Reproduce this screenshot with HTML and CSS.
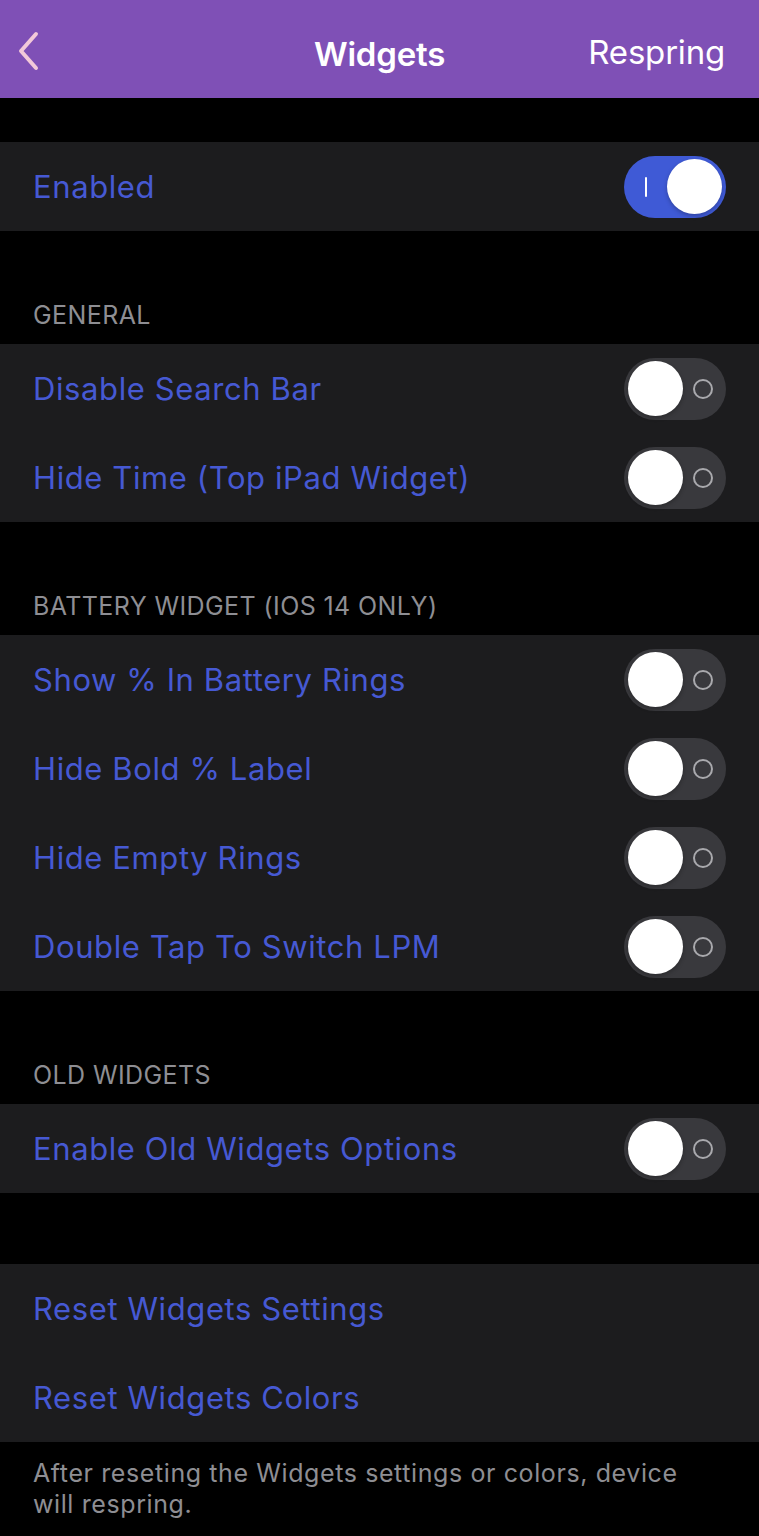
FILE: index.html
```html
<!DOCTYPE html>
<html lang="en">
<head>
  <meta charset="UTF-8" />
  <title>Widgets</title>
  <meta name="viewport" content="width=device-width, initial-scale=1.0"/>
  <link rel="stylesheet" href="styles.css">
</head>
<body>
  <header class="nav-bar">
    <button class="nav-back" aria-label="Back">
      <svg width="24" height="40" viewBox="0 0 24 40">
        <path d="M20 3 L5 20 L20 37" fill="none" stroke="#f3c9d9" stroke-width="4" stroke-linecap="round" stroke-linejoin="round"/>
      </svg>
    </button>
    <h1 class="nav-title">Widgets</h1>
    <button class="nav-action">Respring</button>
  </header>

  <main class="settings">
    <section class="section section-first">
      <div class="group">
        <div class="row">
          <span class="row-label">Enabled</span>
          <span class="switch on"><span class="switch-mark"></span><span class="switch-knob"></span></span>
        </div>
      </div>
    </section>

    <section class="section">
      <h2 class="section-title">GENERAL</h2>
      <div class="group">
        <div class="row">
          <span class="row-label">Disable Search Bar</span>
          <span class="switch"><span class="switch-knob"></span><span class="switch-mark"></span></span>
        </div>
        <div class="row">
          <span class="row-label">Hide Time (Top iPad Widget)</span>
          <span class="switch"><span class="switch-knob"></span><span class="switch-mark"></span></span>
        </div>
      </div>
    </section>

    <section class="section">
      <h2 class="section-title">BATTERY WIDGET (IOS 14 ONLY)</h2>
      <div class="group">
        <div class="row">
          <span class="row-label">Show % In Battery Rings</span>
          <span class="switch"><span class="switch-knob"></span><span class="switch-mark"></span></span>
        </div>
        <div class="row">
          <span class="row-label">Hide Bold % Label</span>
          <span class="switch"><span class="switch-knob"></span><span class="switch-mark"></span></span>
        </div>
        <div class="row">
          <span class="row-label">Hide Empty Rings</span>
          <span class="switch"><span class="switch-knob"></span><span class="switch-mark"></span></span>
        </div>
        <div class="row">
          <span class="row-label">Double Tap To Switch LPM</span>
          <span class="switch"><span class="switch-knob"></span><span class="switch-mark"></span></span>
        </div>
      </div>
    </section>

    <section class="section">
      <h2 class="section-title">OLD WIDGETS</h2>
      <div class="group">
        <div class="row">
          <span class="row-label">Enable Old Widgets Options</span>
          <span class="switch"><span class="switch-knob"></span><span class="switch-mark"></span></span>
        </div>
      </div>
    </section>

    <section class="section section-plain">
      <div class="group">
        <div class="row"><span class="row-label">Reset Widgets Settings</span></div>
        <div class="row"><span class="row-label">Reset Widgets Colors</span></div>
      </div>
      <p class="section-footer">After reseting the Widgets settings or colors, device will respring.</p>
    </section>
  </main>
</body>
</html>
```

FILE: styles.css
```css
:root {
  --nav: #7f50b6;
  --bg: #000000;
  --cell: #1c1c1e;
  --tint: #4659d3;
  --muted: #8e8e93;
  --switch-off: #39393d;
}

* {
  box-sizing: border-box;
}

body {
  margin: 0;
  background: var(--bg);
  font-family: Inter, "Noto Sans", sans-serif;
  color: #fff;
}

.nav-bar {
  height: 98px;
  background: var(--nav);
  display: flex;
  align-items: center;
  justify-content: space-between;
  padding: 6px 34px 0 16px;
  position: relative;
}

.nav-back {
  background: none;
  border: none;
  padding: 0;
  display: flex;
  margin-top: -2px;
}

.nav-title {
  position: absolute;
  left: 0;
  right: 0;
  top: 34px;
  text-align: center;
  margin: 0;
  font-size: 33px;
  line-height: 40px;
  font-weight: 600;
  letter-spacing: -0.2px;
  pointer-events: none;
}

.nav-action {
  background: none;
  border: none;
  padding: 0;
  color: #fff;
  font-family: inherit;
  font-size: 33px;
  letter-spacing: -0.2px;
}

.section {
  padding-top: 113px;
}

.section-first {
  padding-top: 44px;
}

.section-plain {
  padding-top: 71px;
}

.section-title {
  margin: -41px 0 0;
  height: 41px;
  padding: 0 33px;
  font-size: 25px;
  line-height: 25px;
  font-weight: 400;
  color: var(--muted);
  letter-spacing: 0.4px;
}

.group {
  background: var(--cell);
}

.row {
  height: 89px;
  display: flex;
  align-items: center;
  justify-content: space-between;
  padding: 0 33px;
}

.row-label {
  color: var(--tint);
  font-size: 31px;
  letter-spacing: 0.6px;
}

.switch {
  width: 102px;
  height: 62px;
  border-radius: 31px;
  background: var(--switch-off);
  display: flex;
  align-items: center;
  padding: 0 4px;
  gap: 10px;
}

.switch-knob {
  width: 55px;
  height: 55px;
  border-radius: 50%;
  background: #fff;
  box-shadow: 0 2px 4px rgba(0,0,0,0.25);
}

.switch-mark {
  width: 20px;
  height: 20px;
  border-radius: 50%;
  border: 2px solid #a9a9ad;
}

.switch.on {
  background: #3f5ad6;
  justify-content: flex-end;
  gap: 20px;
}

.switch.on .switch-mark {
  width: 2px;
  height: 20px;
  border: none;
  border-radius: 1px;
  background: #fff;
}

.section-footer {
  margin: 0;
  padding: 16px 60px 16px 33px;
  font-size: 25px;
  line-height: 31px;
  letter-spacing: 0.6px;
  color: var(--muted);
}
```
